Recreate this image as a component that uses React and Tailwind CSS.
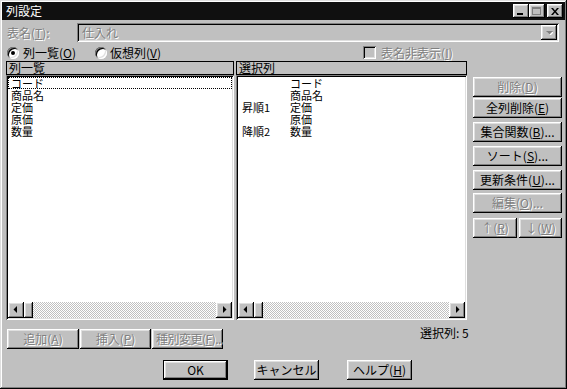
import React from "react";

const btn =
  "bg-[#c0c0c0] shadow-[inset_-1px_-1px_#000,inset_1px_1px_#fff,inset_-2px_-2px_#808080,inset_2px_2px_#dfdfdf]";
const sunken =
  "shadow-[inset_1px_1px_#808080,inset_-1px_-1px_#fff,inset_2px_2px_#000,inset_-2px_-2px_#dfdfdf]";
const dis = "text-[#808080] [text-shadow:1px_1px_0_#fff]";

function Btn({ children, className = "", disabled = false }) {
  return (
    <div
      className={`${btn} flex items-center whitespace-nowrap overflow-hidden text-[12px] leading-none ${
        disabled ? dis : "text-black"
      } ${className.includes("justify-") ? "" : "justify-center"} ${className}`}
    >
      {children}
    </div>
  );
}

function Arrow({ dir }) {
  return (
    <div className={`${btn} w-[16px] h-[16px] flex items-center justify-center shrink-0`}>
      <svg width="8" height="8" viewBox="0 0 8 8">
        {dir === "left" ? (
          <polygon points="5,0 5,7 1.5,3.5" fill="#000" />
        ) : (
          <polygon points="3,0 3,7 6.5,3.5" fill="#000" />
        )}
      </svg>
    </div>
  );
}

function HScroll() {
  return (
    <div className="h-[16px] flex">
      <Arrow dir="left" />
      <div className={`${btn} w-[9px] h-[16px] shrink-0`} />
      <div className="flex-1 bg-[repeating-conic-gradient(#c0c0c0_0_25%,#fff_0_50%)] bg-[length:2px_2px]" />
      <Arrow dir="right" />
    </div>
  );
}

function Panel({ title, width, children }) {
  return (
    <div className={`flex flex-col ${width}`}>
      <div className="h-[14px] border border-black bg-[#c0c0c0] pl-[2px] text-[12px] leading-[12px] text-black">
        {title}
      </div>
      <div className={`h-[245px] bg-white ${sunken} p-[2px] flex flex-col`}>
        <div className="flex-1">{children}</div>
        <HScroll />
      </div>
    </div>
  );
}

export default function App() {
  const items = ["コード", "商品名", "定価", "原価", "数量"];
  const sort = ["", "", "昇順1", "", "降順2"];
  return (
    <div
      className="w-[567px] h-[389px] bg-[#c0c0c0] p-[2px] flex flex-col shadow-[inset_-1px_-1px_#000,inset_1px_1px_#dfdfdf,inset_-2px_-2px_#808080,inset_2px_2px_#fff] text-black"
      style={{ fontFamily: '"Noto Sans CJK JP", "Noto Sans", sans-serif' }}
    >
      {/* Title bar */}
      <div className="h-[18px] bg-[#101010] flex items-center pl-[4px] pr-[2px]">
        <span className="text-white text-[12px] leading-none">列設定</span>
        <div className="ml-auto flex items-center">
          <div className={`${btn} w-[16px] h-[14px] flex items-end justify-center pb-[3px]`}>
            <div className="w-[6px] h-[2px] bg-black ml-[-2px]" />
          </div>
          <div className={`${btn} w-[16px] h-[14px] flex items-center justify-center`}>
            <div className="w-[9px] h-[8px] border border-[#808080] border-t-2 ml-[-1px]" />
          </div>
          <div className={`${btn} w-[16px] h-[14px] ml-[2px] flex items-center justify-center`}>
            <svg width="8" height="7" viewBox="0 0 8 7">
              <path d="M0 0h2l2 2.5 2-2.5h2l-3 3.5 3 3.5h-2l-2-2.5-2 2.5h-2l3-3.5z" fill="#000" />
            </svg>
          </div>
        </div>
      </div>

      {/* Table name row */}
      <div className="flex items-center mt-[3px] h-[19px] pl-[5px] pr-[6px]">
        <div className={`w-[70px] text-[12px] leading-none ${dis}`}>
          表名(<u>T</u>):
        </div>
        <div className={`flex-1 h-[19px] ${sunken} p-[2px] flex items-center`}>
          <span className={`pl-[3px] text-[12px] leading-none ${dis}`}>仕入れ</span>
          <div className={`${btn} ml-auto w-[16px] h-[15px] flex items-center justify-center`}>
            <svg width="7" height="4" viewBox="0 0 7 4">
              <polygon points="1,1 8,1 4.5,4.5" fill="#fff" />
              <polygon points="0,0 7,0 3.5,3.5" fill="#808080" />
            </svg>
          </div>
        </div>
      </div>

      {/* Radio row */}
      <div className="flex items-center mt-[4px] h-[13px] pl-[5px] text-[12px] leading-none">
        <div className={`w-[12px] h-[12px] rounded-full bg-white ${sunken} flex items-center justify-center`}>
          <div className="w-[4px] h-[4px] rounded-full bg-black" />
        </div>
        <span className="ml-[4px]">
          列一覧(<u>O</u>)
        </span>
        <div className={`ml-[19px] w-[12px] h-[12px] rounded-full bg-white ${sunken}`} />
        <span className="ml-[3px]">
          仮想列(<u>V</u>)
        </span>
        <div className={`ml-[202px] w-[13px] h-[13px] bg-[#c0c0c0] ${sunken}`} />
        <span className={`ml-[5px] ${dis}`}>
          表名非表示(<u>I</u>)
        </span>
      </div>

      {/* Main row */}
      <div className="flex mt-[2px] pl-[4px]">
        <Panel title="列一覧" width="w-[228px]">
          <div className="text-[11px] leading-[12px]">
            {items.map((t, i) => (
              <div
                key={t}
                className={`h-[12px] pl-[3px] ${i === 0 ? "outline outline-1 outline-dotted outline-black -outline-offset-1" : ""}`}
              >
                {t}
              </div>
            ))}
          </div>
        </Panel>
        <div className="w-[2px]" />
        <Panel title="選択列" width="w-[231px]">
          <div className="text-[11px] leading-[12px]">
            {items.map((t, i) => (
              <div key={t} className="h-[12px] flex">
                <span className="w-[52px] pl-[4px]">{sort[i]}</span>
                <span>{t}</span>
              </div>
            ))}
          </div>
        </Panel>
        <div className="ml-[6px] w-[89px] flex flex-col pt-[16px]">
          <Btn disabled className="h-[20px]">
            削除(<u>D</u>)
          </Btn>
          <Btn className="h-[20px] mt-[1px]">
            全列削除(<u>E</u>)
          </Btn>
          <Btn className="h-[20px] mt-[4px]">
            集合関数(<u>B</u>)...
          </Btn>
          <Btn className="h-[20px] mt-[4px]">
            ソート(<u>S</u>)...
          </Btn>
          <Btn className="h-[20px] mt-[4px]">
            更新条件(<u>U</u>)...
          </Btn>
          <Btn disabled className="h-[20px] mt-[3px]">
            編集(<u>O</u>)...
          </Btn>
          <div className="flex mt-[5px] gap-[2px]">
            <Btn disabled className="h-[20px] w-[44px]">
              ↑(<u>R</u>)
            </Btn>
            <Btn disabled className="h-[20px] flex-1">
              ↓(<u>W</u>)
            </Btn>
          </div>
        </div>
      </div>

      {/* Bottom action row */}
      <div className="flex items-start mt-[9px] pl-[5px]">
        <Btn disabled className="w-[72px] h-[20px]">
          追加(<u>A</u>)
        </Btn>
        <Btn disabled className="w-[71px] h-[20px] ml-[1px]">
          挿入(<u>P</u>)
        </Btn>
        <Btn disabled className="w-[71px] h-[20px] ml-[1px] justify-start pl-[4px] tracking-[-0.5px]">
          種別変更(<u>F</u>)...
        </Btn>
        <div className="ml-[197px] mt-[-2px] text-[12px] leading-none">選択列: 5</div>
      </div>

      {/* OK row */}
      <div className="flex mt-[11px] pl-[161px]">
        <div className="w-[65px] h-[20px] border border-black flex">
          <Btn className="flex-1">OK</Btn>
        </div>
        <Btn className="w-[65px] h-[20px] ml-[26px]">キャンセル</Btn>
        <Btn className="w-[65px] h-[20px] ml-[28px]">
          ヘルプ(<u>H</u>)
        </Btn>
      </div>
    </div>
  );
}
